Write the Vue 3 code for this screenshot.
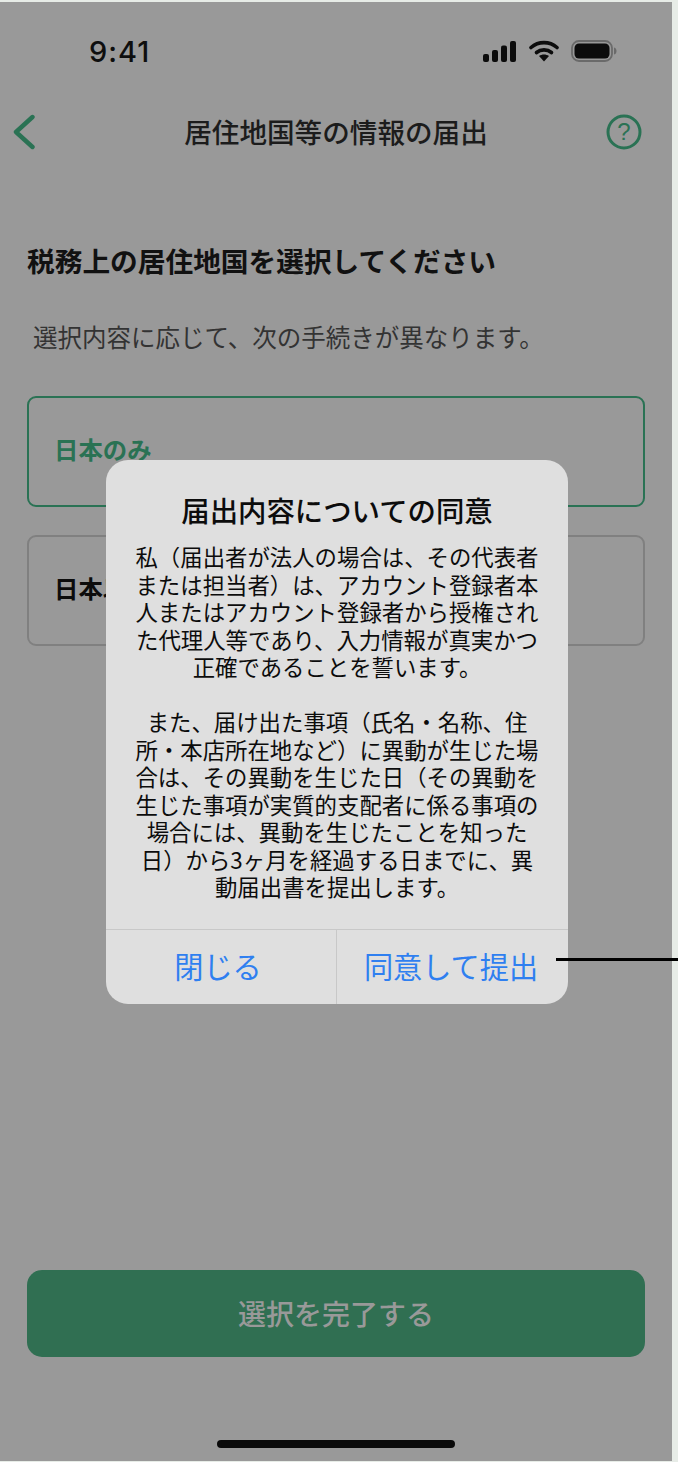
<script setup>
const para1 = ['私（届出者が法人の場合は、その代表者', 'または担当者）は、アカウント登録者本', '人またはアカウント登録者から授権され', 'た代理人等であり、入力情報が真実かつ', '正確であることを誓います。']
const para2 = ['また、届け出た事項（氏名・名称、住', '所・本店所在地など）に異動が生じた場', '合は、その異動を生じた日（その異動を', '生じた事項が実質的支配者に係る事項の', '場合には、異動を生じたことを知った', '日）から3ヶ月を経過する日までに、異', '動届出書を提出します。']
</script>

<template>
  <div class="page">
    <div class="phone">
      <div class="status">
        <span class="time">9:41</span>
        <div class="status-icons">
          <svg width="34" height="21" viewBox="0 0 34 21"><rect x="0" y="13" width="6" height="8" rx="2" fill="#0c0c0c"/><rect x="9" y="9" width="6" height="12" rx="2" fill="#0c0c0c"/><rect x="18" y="4.500" width="6" height="16.500" rx="2" fill="#0c0c0c"/><rect x="27" y="0" width="6" height="21" rx="2" fill="#0c0c0c"/></svg>
          <svg width="30" height="22" viewBox="0 0 30 22"><path d="M2 7.500C9.500 1 20.500 1 28 7.500" fill="none" stroke="#0c0c0c" stroke-width="3.600" stroke-linecap="round"/><path d="M7.500 12.500C11.800 9 18.200 9 22.500 12.500" fill="none" stroke="#0c0c0c" stroke-width="3.600" stroke-linecap="round"/><path d="M10 16L15 21.500L20 16C17 14 13 14 10 16Z" fill="#0c0c0c"/></svg>
          <svg width="46" height="22" viewBox="0 0 46 22"><rect x="1" y="1" width="40" height="20" rx="7" fill="none" stroke="#6a6a6a" stroke-width="1.800"/><rect x="3.500" y="3.500" width="35" height="15" rx="4.500" fill="#0c0c0c"/><path d="M43 7.500C45 8 45.500 9.500 45.500 11C45.500 12.500 45 14 43 14.500Z" fill="#6a6a6a"/></svg>
        </div>
      </div>

      <div class="nav">
        <svg class="back" width="24" height="36" viewBox="0 0 24 36"><path d="M20.500 3L4 18L20.500 33" fill="none" stroke="#2a7254" stroke-width="4.400" stroke-linecap="round" stroke-linejoin="round"/></svg>
        <span class="nav-title">居住地国等の情報の届出</span>
        <svg class="help" width="36" height="36" viewBox="0 0 36 36"><circle cx="18" cy="18" r="16" fill="none" stroke="#2a7254" stroke-width="3"/><text x="18" y="26" text-anchor="middle" class="help-mark">?</text></svg>
      </div>

      <main class="content">
        <h1 class="heading">税務上の居住地国を選択してください</h1>
        <p class="lead">選択内容に応じて、次の手続きが異なります。</p>
        <div class="option selected">日本のみ</div>
        <div class="option">日本以外</div>
      </main>

      <button class="submit" type="button">選択を完了する</button>
      <div class="home-wrap"><div class="home"></div></div>
    </div>

    <div class="modal">
      <h2 class="modal-title">届出内容についての同意</h2>
      <div class="modal-body">
        <p><span v-for="l in para1" :key="l" class="line">{{ l }}</span></p>
        <p><span v-for="l in para2" :key="l" class="line">{{ l }}</span></p>
      </div>
      <div class="actions">
        <button class="action close" type="button">閉じる</button>
        <button class="action agree" type="button">同意して提出</button>
      </div>
    </div>
    <div class="pointer"></div>
  </div>
</template>

<style scoped>
.page {
  position: relative;
  width: 678px;
  height: 1462px;
  padding-top: 2px;
  box-sizing: border-box;
  background: #e7ece7;
  overflow: hidden;
  font-family: "Noto Sans CJK JP", "Noto Sans", sans-serif;
}
.phone {
  width: 672px;
  height: 1459px;
  background: #999999;
  display: flex;
  flex-direction: column;
}
.status {
  height: 90px;
  padding: 8px 55px 0 89px;
  display: flex;
  align-items: center;
  justify-content: space-between;
  box-sizing: border-box;
}
.time {
  font-family: Inter, "Liberation Sans", sans-serif;
  font-size: 29px;
  font-weight: 500;
  color: #0e0e0e;
  letter-spacing: 1px;
}
.status-icons {
  display: flex;
  align-items: center;
  gap: 12px;
}
.nav {
  height: 80px;
  padding: 0 30px;
  display: grid;
  grid-template-columns: 1fr auto 1fr;
  align-items: center;
}
.back {
  margin-left: -18px;
}
.help {
  justify-self: end;
}
.nav-title {
  font-size: 27.600px;
  font-weight: 500;
  color: #1c1c1c;
  line-height: 1;
}
.help-mark {
  font-family: "Liberation Sans", sans-serif;
  font-size: 24px;
  fill: #2a7254;
}
.content {
  flex: 1;
  padding: 0 27px;
  display: flex;
  flex-direction: column;
}
.heading {
  margin: 68px 0 0;
  font-size: 27.700px;
  font-weight: 700;
  line-height: 40px;
  color: #111111;
}
.lead {
  margin: 40px 0 0 6px;
  font-size: 24.500px;
  font-weight: 400;
  line-height: 34px;
  color: #333333;
  white-space: nowrap;
}
.option {
  margin-top: 42px;
  height: 111px;
  box-sizing: border-box;
  padding: 0 25px 6px;
  display: flex;
  align-items: center;
  border: 2px solid #7f8a85;
  border-radius: 9px;
  font-size: 24.400px;
  font-weight: 700;
  color: #0c0c0c;
}
.option + .option {
  margin-top: 28px;
  border-color: #808080;
}
.option.selected {
  border-color: #2a7254;
  color: #2a7254;
}
.submit {
  margin: 0 27px;
  height: 87px;
  border: 0;
  border-radius: 15px;
  background: #306f52;
  color: #999999;
  font-family: inherit;
  font-size: 28px;
  font-weight: 500;
  padding: 0 0 2px;
}
.home-wrap {
  height: 104px;
  display: flex;
  align-items: flex-start;
  justify-content: center;
  padding-top: 83px;
  box-sizing: border-box;
}
.home {
  width: 238px;
  height: 8px;
  border-radius: 4px;
  background: #0a0a0a;
}
.modal {
  position: absolute;
  left: 106px;
  top: 460px;
  width: 462px;
  height: 544px;
  background: #dfdfdf;
  border-radius: 22px;
  display: flex;
  flex-direction: column;
  overflow: hidden;
}
.modal-title {
  margin: 28px 0 0;
  font-size: 28.400px;
  font-weight: 500;
  line-height: 44px;
  text-align: center;
  color: #0c0c0c;
}
.modal-body {
  margin-top: 11px;
  flex: 1;
  text-align: center;
  font-size: 22.400px;
  line-height: 27.500px;
  color: #0c0c0c;
}
.modal-body p {
  margin: 0 0 27.500px;
}
.line {
  display: block;
  white-space: nowrap;
}
.actions {
  height: 75px;
  display: flex;
  border-top: 1px solid #c8c8c8;
  box-sizing: border-box;
}
.action {
  border: 0;
  background: transparent;
  color: #2f7ff0;
  font-family: inherit;
  font-size: 29.200px;
  font-weight: 400;
}
.close {
  width: 230px;
  padding: 0 6px 4px 0;
}
.agree {
  flex: 1;
  padding: 0 3px 4px 0;
  border-left: 1px solid #c8c8c8;
}
.pointer {
  position: absolute;
  left: 556px;
  top: 958px;
  width: 122px;
  height: 3px;
  background: #000000;
}
</style>
